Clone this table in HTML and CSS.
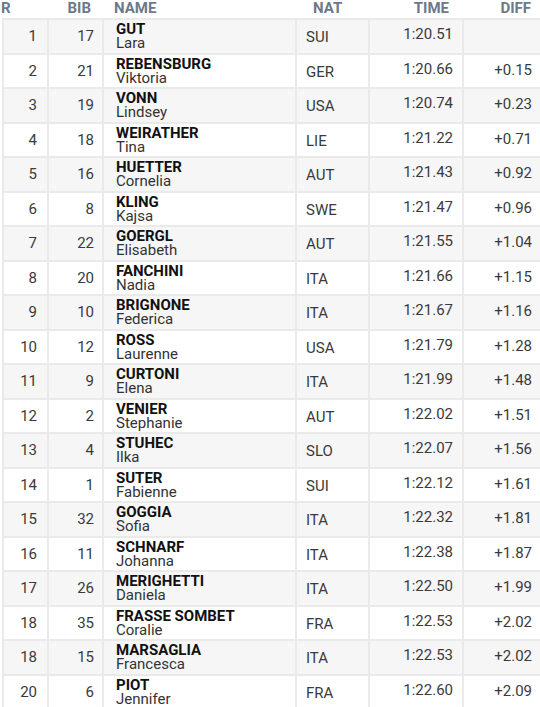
FILE: index.html
```html
<!DOCTYPE html>
<html>
<head>
<meta charset="utf-8">
<link rel="stylesheet" href="styles.css">
</head>
<body>
<table class="results">
  <colgroup>
    <col class="c-r"><col class="c-bib"><col class="c-name"><col class="c-nat"><col class="c-time"><col class="c-diff">
  </colgroup>
  <thead>
    <tr>
      <th class="h-r">R</th>
      <th class="h-bib">BIB</th>
      <th class="h-name">NAME</th>
      <th class="h-nat">NAT</th>
      <th class="h-time">TIME</th>
      <th class="h-diff">DIFF</th>
    </tr>
  </thead>
  <tbody>
    <tr><td class="num">1</td><td class="num bib">17</td><td class="name"><b>GUT</b><span>Lara</span></td><td class="nat">SUI</td><td class="time">1:20.51</td><td class="diff"></td></tr>
    <tr><td class="num">2</td><td class="num bib">21</td><td class="name"><b>REBENSBURG</b><span>Viktoria</span></td><td class="nat">GER</td><td class="time">1:20.66</td><td class="diff">+0.15</td></tr>
    <tr><td class="num">3</td><td class="num bib">19</td><td class="name"><b>VONN</b><span>Lindsey</span></td><td class="nat">USA</td><td class="time">1:20.74</td><td class="diff">+0.23</td></tr>
    <tr><td class="num">4</td><td class="num bib">18</td><td class="name"><b>WEIRATHER</b><span>Tina</span></td><td class="nat">LIE</td><td class="time">1:21.22</td><td class="diff">+0.71</td></tr>
    <tr><td class="num">5</td><td class="num bib">16</td><td class="name"><b>HUETTER</b><span>Cornelia</span></td><td class="nat">AUT</td><td class="time">1:21.43</td><td class="diff">+0.92</td></tr>
    <tr><td class="num">6</td><td class="num bib">8</td><td class="name"><b>KLING</b><span>Kajsa</span></td><td class="nat">SWE</td><td class="time">1:21.47</td><td class="diff">+0.96</td></tr>
    <tr><td class="num">7</td><td class="num bib">22</td><td class="name"><b>GOERGL</b><span>Elisabeth</span></td><td class="nat">AUT</td><td class="time">1:21.55</td><td class="diff">+1.04</td></tr>
    <tr><td class="num">8</td><td class="num bib">20</td><td class="name"><b>FANCHINI</b><span>Nadia</span></td><td class="nat">ITA</td><td class="time">1:21.66</td><td class="diff">+1.15</td></tr>
    <tr><td class="num">9</td><td class="num bib">10</td><td class="name"><b>BRIGNONE</b><span>Federica</span></td><td class="nat">ITA</td><td class="time">1:21.67</td><td class="diff">+1.16</td></tr>
    <tr><td class="num">10</td><td class="num bib">12</td><td class="name"><b>ROSS</b><span>Laurenne</span></td><td class="nat">USA</td><td class="time">1:21.79</td><td class="diff">+1.28</td></tr>
    <tr><td class="num">11</td><td class="num bib">9</td><td class="name"><b>CURTONI</b><span>Elena</span></td><td class="nat">ITA</td><td class="time">1:21.99</td><td class="diff">+1.48</td></tr>
    <tr><td class="num">12</td><td class="num bib">2</td><td class="name"><b>VENIER</b><span>Stephanie</span></td><td class="nat">AUT</td><td class="time">1:22.02</td><td class="diff">+1.51</td></tr>
    <tr><td class="num">13</td><td class="num bib">4</td><td class="name"><b>STUHEC</b><span>Ilka</span></td><td class="nat">SLO</td><td class="time">1:22.07</td><td class="diff">+1.56</td></tr>
    <tr><td class="num">14</td><td class="num bib">1</td><td class="name"><b>SUTER</b><span>Fabienne</span></td><td class="nat">SUI</td><td class="time">1:22.12</td><td class="diff">+1.61</td></tr>
    <tr><td class="num">15</td><td class="num bib">32</td><td class="name"><b>GOGGIA</b><span>Sofia</span></td><td class="nat">ITA</td><td class="time">1:22.32</td><td class="diff">+1.81</td></tr>
    <tr><td class="num">16</td><td class="num bib">11</td><td class="name"><b>SCHNARF</b><span>Johanna</span></td><td class="nat">ITA</td><td class="time">1:22.38</td><td class="diff">+1.87</td></tr>
    <tr><td class="num">17</td><td class="num bib">26</td><td class="name"><b>MERIGHETTI</b><span>Daniela</span></td><td class="nat">ITA</td><td class="time">1:22.50</td><td class="diff">+1.99</td></tr>
    <tr><td class="num">18</td><td class="num bib">35</td><td class="name"><b>FRASSE SOMBET</b><span>Coralie</span></td><td class="nat">FRA</td><td class="time">1:22.53</td><td class="diff">+2.02</td></tr>
    <tr><td class="num">18</td><td class="num bib">15</td><td class="name"><b>MARSAGLIA</b><span>Francesca</span></td><td class="nat">ITA</td><td class="time">1:22.53</td><td class="diff">+2.02</td></tr>
    <tr><td class="num">20</td><td class="num bib">6</td><td class="name"><b>PIOT</b><span>Jennifer</span></td><td class="nat">FRA</td><td class="time">1:22.60</td><td class="diff">+2.09</td></tr>
  </tbody>
</table>
</body>
</html>
```

FILE: styles.css
```css
html, body {
  margin: 0;
  padding: 0;
  background: #ffffff;
}

.results {
  border-collapse: collapse;
  table-layout: fixed;
  width: 538px;
  margin-left: 2px;
  font-family: Roboto, "Noto Sans", sans-serif;
  font-size: 15px;
  color: #3a3a3a;
}

.c-r { width: 45px; }
.c-bib { width: 55px; }
.c-name { width: 193px; }
.c-nat { width: 73px; }
.c-time { width: 94px; }
.c-diff { width: 78px; }

.results th {
  height: 18px;
  padding: 0;
  border: none;
  font-weight: 700;
  font-size: 15px;
  line-height: 16px;
  color: #6c7989;
  vertical-align: top;
  white-space: nowrap;
}

.h-r { text-align: left; position: relative; left: -2px; }
.h-bib { text-align: right; padding-right: 12px !important; }
.h-name { text-align: left; padding-left: 11px !important; }
.h-nat { text-align: left; padding-left: 17px !important; }
.h-time { text-align: right; padding-right: 14px !important; }
.h-diff { text-align: right; padding-right: 10px !important; }

.results tbody tr { height: 34.5px; }
.results tbody tr:nth-child(odd) { background: #f6f6f6; }

.results td {
  border: 2px solid #eaeaea;
  padding: 0;
  vertical-align: middle;
  white-space: nowrap;
}

.num { text-align: right; padding-right: 10px !important; }
.bib { padding-right: 8px !important; }

.name {
  padding-left: 12px !important;
  line-height: 14px;
}
.name b {
  display: block;
  font-weight: 700;
  color: #111111;
}
.name span {
  display: block;
  color: #333333;
}

.nat { padding-left: 9px !important; padding-top: 2px !important; }
.time { text-align: right; padding-right: 9px !important; padding-bottom: 4px !important; }
.diff { text-align: right; padding-right: 8px !important; padding-bottom: 2px !important; }
```
